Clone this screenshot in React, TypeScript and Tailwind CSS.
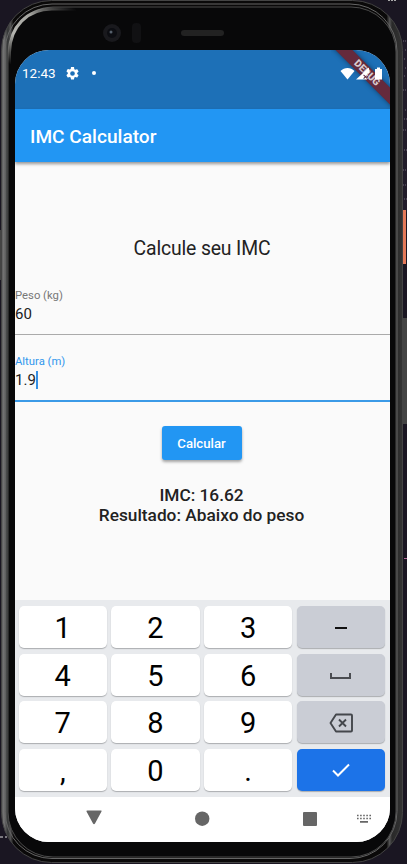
import React from "react";

const keyBase =
  "flex h-[42px] w-[88.5px] items-center justify-center rounded-[5px] shadow-[0_1px_1px_rgba(60,64,67,0.35)]";

function NumberKey({ label }: { label: string }) {
  return <div className={`${keyBase} bg-white pt-[3px] text-[29px] leading-none text-black`}>{label}</div>;
}

function Debug() {
  return (
    <div className="absolute top-0 right-0 h-[59px] w-[59px] overflow-hidden">
      <div className="absolute top-[17px] left-[-9px] flex h-[12px] w-[90px] rotate-45 items-center justify-center bg-[#652a3c] text-[10px] font-black leading-none text-[#d8cbd0] shadow-[0_0_5px_rgba(0,0,0,0.45)]">
        DEBUG
      </div>
    </div>
  );
}

function StatusBar() {
  return (
    <div className="relative h-[59px] shrink-0 bg-[#1d70b7] text-white">
      <Debug />
      <div className="relative flex h-[47px] items-center pl-[7px]">
        <span className="w-[34px] text-[13.5px] leading-none whitespace-nowrap">12:43</span>
        <svg className="mb-px ml-[10px]" width="13" height="13" viewBox="2 2 20 20" fill="white">
          <path d="M19.14 12.94c.04-.3.06-.61.06-.94s-.02-.64-.07-.94l2.03-1.58a.49.49 0 0 0 .12-.61l-1.92-3.32a.49.49 0 0 0-.59-.22l-2.39.96a7 7 0 0 0-1.62-.94l-.36-2.54A.48.48 0 0 0 13.92 2h-3.84a.48.48 0 0 0-.47.41l-.36 2.54c-.59.24-1.13.57-1.62.94l-2.39-.96a.49.49 0 0 0-.59.22L2.73 8.47a.48.48 0 0 0 .12.61l2.03 1.58c-.05.3-.09.63-.09.94s.02.64.07.94l-2.03 1.58a.49.49 0 0 0-.12.61l1.92 3.32c.12.22.37.29.59.22l2.39-.96c.5.38 1.03.7 1.62.94l.36 2.54c.05.24.24.41.48.41h3.84c.24 0 .44-.17.47-.41l.36-2.54c.59-.24 1.13-.56 1.62-.94l2.39.96c.22.08.47 0 .59-.22l1.92-3.32a.48.48 0 0 0-.12-.61zM12 15.6A3.6 3.6 0 1 1 12 8.4a3.6 3.6 0 0 1 0 7.2z" />
        </svg>
        <span className="mb-px ml-[13px] h-1 w-1 rounded-full bg-white" />
        <svg className="ml-auto mr-[7px]" width="43" height="14" viewBox="0 0 43 14" fill="white">
          <path d="M.5 4C4.5 0 10.500 0 14.500 4L7.500 12.500z" />
          <path fillRule="evenodd" d="M29 .5v6h-2v6H16zM24 7.500l1.500 1.500 1.500-1.500.8.8-1.500 1.500 1.500 1.500-.8.8-1.500-1.500-1.500 1.500-.8-.8 1.500-1.500-1.500-1.500z" />
          <path d="M37 .5h3V2h2v10.500h-7V2h2z" />
        </svg>
      </div>
    </div>
  );
}

function Keyboard() {
  return (
    <div className="h-[197px] shrink-0 bg-[#e8eaed] pt-[6px] pl-[3.5px]">
      <div className="grid w-[366.500px] grid-cols-4 gap-x-[4.200px] gap-y-[5.500px]">
        <NumberKey label="1" />
        <NumberKey label="2" />
        <NumberKey label="3" />
        <div className={`${keyBase} bg-[#cacdd5]`}>
          <span className="mt-px h-[2px] w-3 bg-[#111]" />
        </div>
        <NumberKey label="4" />
        <NumberKey label="5" />
        <NumberKey label="6" />
        <div className={`${keyBase} bg-[#cacdd5]`}>
          <span className="mt-[2px] h-[6px] w-[21px] border-x-2 border-b-2 border-[#4a4c51]" />
        </div>
        <NumberKey label="7" />
        <NumberKey label="8" />
        <NumberKey label="9" />
        <div className={`${keyBase} bg-[#cacdd5]`}>
          <svg className="mt-px" width="26" height="20" viewBox="0 0 26 20" fill="none" stroke="#44474c" strokeWidth="1.900">
            <path d="M8 1.500h15q1 0 1 1v15q0 1-1 1H8L2.500 10z" strokeLinejoin="round" />
            <path d="m11 6.500 7 7m0-7-7 7" />
          </svg>
        </div>
        <NumberKey label="," />
        <NumberKey label="0" />
        <NumberKey label="." />
        <div className={`${keyBase} bg-[#1c73e8]`}>
          <svg width="18" height="14" viewBox="0 0 18 14" fill="none" stroke="white" strokeWidth="2">
            <path d="m1 7.500 5 5L17 1.500" />
          </svg>
        </div>
      </div>
    </div>
  );
}

function NavigationBar() {
  return (
    <div className="h-[45px] shrink-0 bg-white">
      <svg width="375" height="45" viewBox="0 0 375 45" fill="#666">
        <path d="M72 13.500h14q1 0 .5 1l-6.500 12q-1 1.500-2 0l-6.500-12q-.500-1 1-1z" />
        <circle cx="187.200" cy="21.700" r="7.200" />
        <rect x="288" y="15" width="14" height="14" rx="1" />
        <path d="M342 18.500h14M342 21.500h14" fill="none" stroke="#666" strokeWidth="1.500" strokeDasharray="1.600 1.500" />
        <path d="M345 24h8v1.700h-8z" />
      </svg>
    </div>
  );
}

export default function App() {
  return (
    <div className="relative h-[864px] w-[407px] overflow-hidden bg-[#1a1622] font-['Roboto',sans-serif]">
      <svg className="absolute inset-0" width="407" height="864">
        <defs>
          <linearGradient id="shell" x2="1">
            <stop offset="0" stopColor="#555" />
            <stop offset=".006" stopColor="#777" />
            <stop offset=".016" stopColor="#303232" />
            <stop offset=".022" stopColor="#555" />
            <stop offset=".03" stopColor="#0a0909" />
            <stop offset=".96" stopColor="#0a0909" />
            <stop offset=".968" stopColor="#555" />
            <stop offset=".974" stopColor="#292929" />
            <stop offset="1" stopColor="#333" />
          </linearGradient>
          <linearGradient id="glint" x1="0" y1="1" x2="1" y2="0">
            <stop offset="0" stopColor="#b5b5b0" stopOpacity="0" />
            <stop offset=".3" stopColor="#b5b5b0" />
            <stop offset=".6" stopColor="#a5a5a0" />
            <stop offset="1" stopColor="#777" stopOpacity="0" />
          </linearGradient>
        </defs>
        <path d="M403 40h4v172h-4z" fill="#211c2a" />
        <path d="M403 41h4M405 50h2M404 59h2M405 68h2M404 76h2M403 90h4M405 110h2M404 119h3M403 130h4M404 150h3M403 170h4M403 185h4M404 199h3" stroke="#706778" strokeDasharray="1 1" />
        <path d="M388 .5h9" stroke="#aaa" strokeDasharray="2 1" />
        <path d="M403 210h3v54h-3z" fill="#e47959" />
        <path d="M402 318h5v106h-5zM0 230h2v50H0z" fill="#444" />
        <path d="M404 558.500h3" stroke="#b26798" />
        <path d="M0 837h7" stroke="#ddd" strokeDasharray="3 2" />
        <rect x="1.500" y=".5" width="401" height="862" rx="50" fill="url(#shell)" stroke="#444" />
        <rect x="5" y="4" width="392" height="854.500" rx="47" fill="none" stroke="#666" />
        <rect x="8" y="7" width="388" height="850" rx="45" fill="#080809" stroke="#4b4b4b" />
        <path d="M9.500 64V52C10 27 27 9 52 9h24" fill="none" stroke="url(#glint)" strokeWidth="3" />
        <circle cx="112" cy="33" r="9" fill="#19191d" />
        <circle cx="112" cy="33" r="5" fill="#0c0d12" />
        <circle cx="111" cy="32" r="1.500" fill="#56606c" />
        <rect x="132" y="23" width="9" height="20" rx="4" fill="#111113" />
        <rect x="181" y="30" width="43" height="6" rx="3" fill="#222" />
      </svg>
      <main className="relative mt-[50px] ml-[15px] flex h-[792px] w-[375px] flex-col overflow-hidden rounded-[34px] bg-[#fafafa] text-[#222]">
        <StatusBar />
        <header className="relative flex h-[53px] shrink-0 items-center bg-[#2296f3] pt-[3px] pl-[15px] text-[19.1px] font-medium text-white shadow-[0_2px_3px_rgba(0,0,0,0.4)]">
          IMC Calculator
        </header>
        <section className="flex h-[438px] shrink-0 flex-col">
          <h1 className="mt-[74px] pr-px text-center text-[19.400px] leading-[26px] font-normal tracking-[-0.150px]">Calcule seu IMC</h1>
          <label className="mt-[27px] flex h-[46px] flex-col border-b border-[#aaa]">
            <span className="text-[11.300px] leading-[13px] text-[#777]">Peso (kg)</span>
            <span className="mt-[3px] text-[15px] leading-[18px]">60</span>
          </label>
          <label className="mt-[20px] flex h-[47px] flex-col border-b-2 border-[#3b9ae7]">
            <span className="text-[11.300px] leading-[13px] text-[#3197ed]">Altura (m)</span>
            <span className="mt-[3px] flex text-[15px] leading-[18px]">
              1.9
              <i className="h-[18px] w-[2px] bg-[#348fe5]" />
            </span>
          </label>
          <button className="mt-[24px] mr-[2px] h-[34px] w-[80px] self-center rounded-[3px] bg-[#2296f3] pt-px text-[13.200px] font-medium text-white shadow-[0_2px_3px_rgba(0,0,0,0.35)]">
            Calcular
          </button>
          <div className="mt-[25px] pr-[2px] text-center text-[17.300px] leading-[20px] font-medium">
            <p>IMC: 16.62</p>
            <p>Resultado: Abaixo do peso</p>
          </div>
        </section>
        <Keyboard />
        <NavigationBar />
      </main>
    </div>
  );
}
